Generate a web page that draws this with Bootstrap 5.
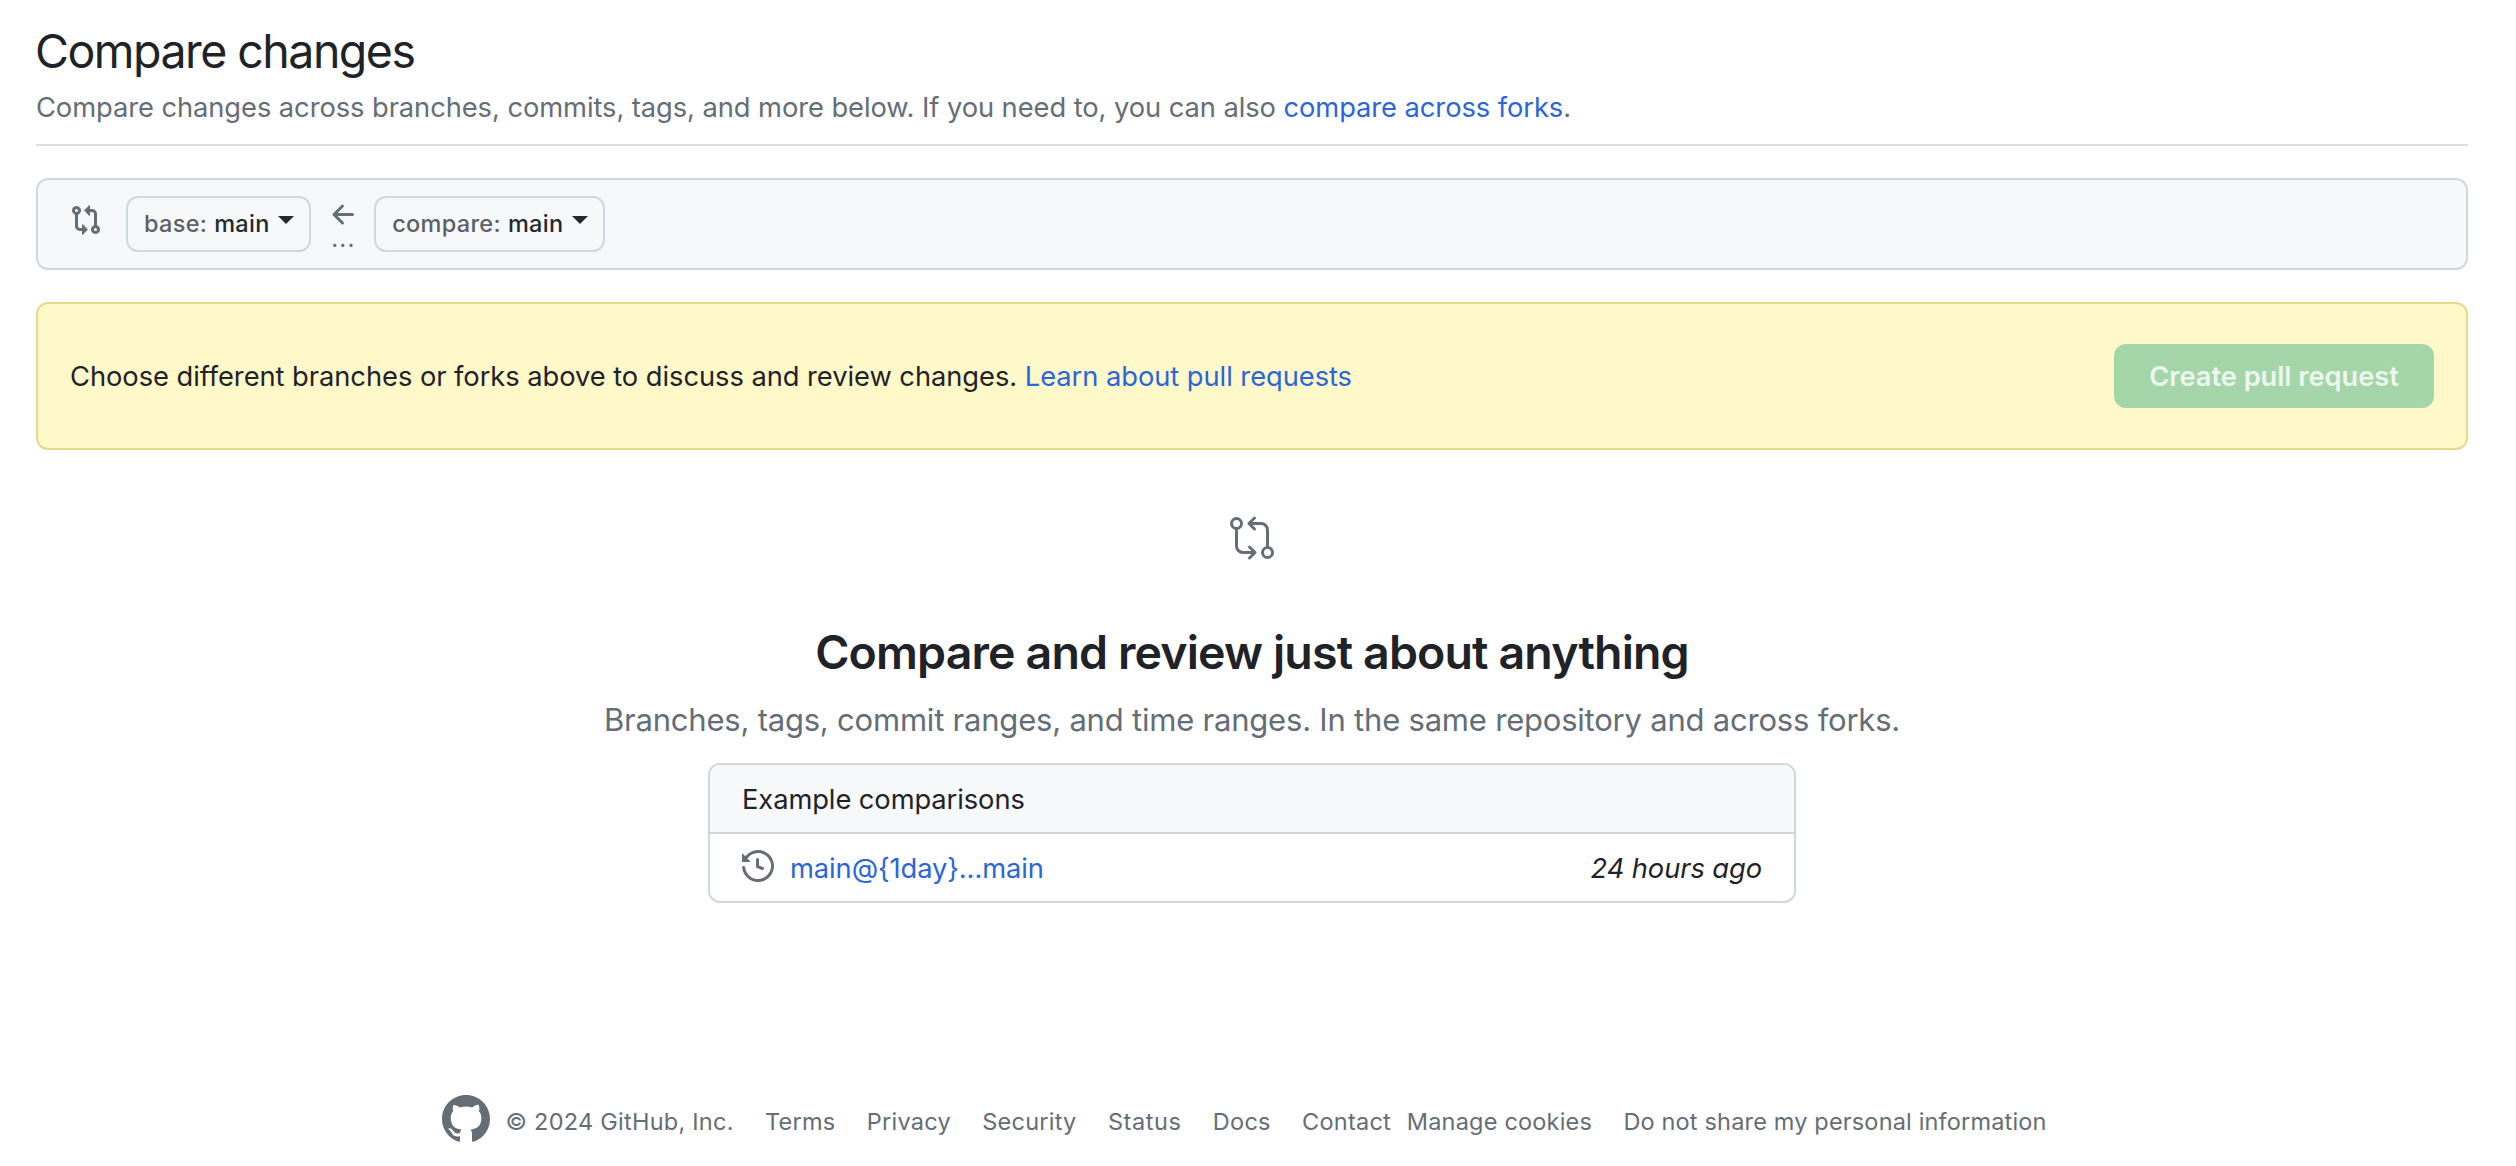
<!DOCTYPE html>
<html lang="en">
<head>
<meta charset="utf-8">
<title>Compare changes</title>
<link href="https://cdn.jsdelivr.net/npm/bootstrap@5.3.0/dist/css/bootstrap.min.css" rel="stylesheet">
<style>
:root{--fg:#1f2328;--muted:#656d76;--line:#d0d7de;--subtle:#f7f8fa;--accent:#2b66d9}
body{font-family:Inter,"Liberation Sans",sans-serif;font-size:27.3px;line-height:42px;color:var(--fg);background:#fff;overflow:hidden}
a{color:var(--accent);text-decoration:none}
svg{display:block;flex:none;fill:currentColor}
.fg-muted{color:var(--muted)}
.page{padding:21px 48px 0 36px}
.page-title{font-size:46.5px;line-height:60px;font-weight:400;letter-spacing:-1.53px;margin:0 0 6px -1px}
.subhead{border-bottom:2px solid #d8dee4;padding-bottom:15px;margin-bottom:32px}
.subhead p{letter-spacing:-.065px}
.range-editor{height:92px;border:2px solid var(--line);border-radius:12px;background:var(--subtle);padding-left:32px;margin-bottom:32px}
.range-icon{margin:-8px 24px 0 0}
.btn-ref{height:56px;border:2px solid var(--line);border-radius:12px;padding:0 15px 0 16px;font-size:23.5px;font-weight:500;line-height:52px;letter-spacing:.3px;color:#24292f;--bs-btn-bg:var(--subtle)}
.btn-ref .ref-key{color:#5c6066;margin-right:7px}
.ref-caret{width:0;height:0;border:8px solid transparent;border-top-color:#24292f;border-bottom:0;margin:-8px 0 0 8.5px}
.arrow-col{width:63px;height:88px;padding:19px 0 0 17px}
.arrow-dots{font-size:24px;line-height:20px;letter-spacing:1.2px;padding-left:3px;margin-top:-2px}
.notice{height:148px;border:2px solid #e9d78b;border-radius:12px;background:#fff8c9;padding:0 32px;letter-spacing:-.045px}
.notice-text{padding-top:2px}
.btn-create{width:320px;height:64px;border:0;border-radius:12px;font-size:27.3px;font-weight:600;line-height:66px;padding:0;letter-spacing:-.05px}
.btn-create:disabled{background:#a4d6aa;color:#ecf7ee;opacity:1}
.blank{padding-top:64px}
.blank h2{font-size:46.5px;line-height:60px;font-weight:600;letter-spacing:-.86px;margin:60px 0 14px}
.blank-text{font-size:31px;line-height:48px;letter-spacing:-.21px;margin:0 0 19px}
.examples{width:1088px;border:2px solid var(--line);border-radius:12px;overflow:hidden;letter-spacing:-.08px}
.examples>div{height:67px;padding:2px 32px 0}
.examples>.ex-head{height:69px;background:var(--subtle);border-bottom:2px solid var(--line)}
.ex-icon{margin-top:-5px}
.foot{padding:192px 0 0 406px;font-size:23.5px;line-height:30px;letter-spacing:.25px}
.foot nav{gap:31.3px;margin:5px 0 0 15.5px}
.foot .f-status{letter-spacing:.6px}
.foot .f-cookies{margin-left:-15.6px;letter-spacing:.2px}
.foot .f-share{letter-spacing:.17px}
</style>
</head>
<body>
<main class="page">
  <header class="subhead">
    <h1 class="page-title">Compare changes</h1>
    <p class="fg-muted mb-0">Compare changes across branches, commits, tags, and more below. If you need to, you can also <a href="#">compare across forks</a>.</p>
  </header>

  <div class="range-editor d-flex align-items-center">
    <svg class="range-icon fg-muted" width="32" height="32" viewBox="0 0 16 16"><path d="M9.573.677A.25.25 0 0 1 10 .854V2.5h1A2.5 2.5 0 0 1 13.5 5v5.628a2.251 2.251 0 1 1-1.5 0V5a1 1 0 0 0-1-1h-1v1.646a.25.25 0 0 1-.427.177L7.177 3.427a.25.25 0 0 1 0-.354ZM6 12v-1.646a.25.25 0 0 1 .427-.177l2.396 2.396a.25.25 0 0 1 0 .354l-2.396 2.396A.25.25 0 0 1 6 15.146V13.5H5A2.5 2.5 0 0 1 2.5 11V5.372a2.25 2.25 0 1 1 1.5 0V11a1 1 0 0 0 1 1ZM4 3.25a.75.75 0 1 0-1.5 0 .75.75 0 0 0 1.5 0ZM12.75 12a.75.75 0 1 0 0 1.5.75.75 0 0 0 0-1.5Z"/></svg>
    <button class="btn btn-ref d-flex align-items-center" type="button"><span class="ref-key">base:</span><span>main</span><span class="ref-caret"></span></button>
    <div class="arrow-col fg-muted">
      <svg width="32" height="32" viewBox="0 0 16 16"><path d="M7.78 12.53a.75.75 0 0 1-1.06 0L2.47 8.28a.75.75 0 0 1 0-1.06l4.25-4.25a.751.751 0 0 1 1.042.018.751.751 0 0 1 .018 1.042L4.81 7h7.44a.75.75 0 0 1 0 1.5H4.81l2.97 2.97a.75.75 0 0 1 0 1.06Z"/></svg>
      <div class="arrow-dots">...</div>
    </div>
    <button class="btn btn-ref d-flex align-items-center" type="button"><span class="ref-key">compare:</span><span>main</span><span class="ref-caret"></span></button>
  </div>

  <div class="notice d-flex align-items-center justify-content-between">
    <div class="notice-text">Choose different branches or forks above to discuss and review changes. <a href="#">Learn about pull requests</a></div>
    <button class="btn btn-success btn-create" type="button" disabled>Create pull request</button>
  </div>

  <section class="blank d-flex flex-column align-items-center">
    <svg class="fg-muted" width="48" height="48" viewBox="0 0 48 48"><g fill="none" stroke="currentColor" stroke-width="3" stroke-linecap="round" stroke-linejoin="round"><circle cx="8.5" cy="9.5" r="5"/><circle cx="39.5" cy="38.5" r="5"/><path d="M8.5 15v17a6.5 6.5 0 0 0 6.5 6.5h11M21.500 33l5.500 5.500-5.500 5.500M39.500 33V16a6.500 6.500 0 0 0-6.500-6.500H22M26.500 4 21 9.500l5.500 5.500"/></g></svg>
    <h2>Compare and review just about anything</h2>
    <p class="blank-text fg-muted">Branches, tags, commit ranges, and time ranges. In the same repository and across forks.</p>
    <div class="examples">
      <div class="ex-head d-flex align-items-center">Example comparisons</div>
      <div class="d-flex align-items-center">
        <svg class="ex-icon fg-muted" width="32" height="32" viewBox="0 0 16 16"><path d="m.427 1.927 1.215 1.215a8.002 8.002 0 1 1-1.6 5.685.75.75 0 1 1 1.493-.154 6.5 6.5 0 1 0 1.18-4.458l1.358 1.358A.25.25 0 0 1 3.896 6H.25A.25.25 0 0 1 0 5.75V2.104a.25.25 0 0 1 .427-.177ZM7.75 4a.75.75 0 0 1 .75.75v2.992l2.028.812a.75.75 0 0 1-.557 1.392l-2.5-1A.751.751 0 0 1 7 8.25v-3.5A.75.75 0 0 1 7.75 4Z"/></svg>
        <a class="ms-3" href="#">main@{1day}...main</a>
        <em class="ms-auto">24 hours ago</em>
      </div>
    </div>
  </section>

  <footer class="foot d-flex fg-muted">
    <svg width="48" height="48" viewBox="0 0 16 16"><path d="M8 0c4.42 0 8 3.58 8 8a8.013 8.013 0 0 1-5.45 7.59c-.4.08-.55-.17-.55-.38 0-.27.01-1.13.01-2.2 0-.75-.25-1.23-.54-1.48 1.78-.2 3.65-.88 3.65-3.95 0-.88-.31-1.59-.82-2.15.08-.2.36-1.02-.08-2.12 0 0-.67-.22-2.2.82-.64-.18-1.32-.27-2-.27-.68 0-1.36.09-2 .27-1.53-1.03-2.2-.82-2.2-.82-.44 1.1-.16 1.92-.08 2.12-.51.56-.82 1.28-.82 2.15 0 3.06 1.86 3.75 3.64 3.95-.23.2-.44.55-.51 1.07-.46.21-1.61.55-2.33-.66-.15-.24-.6-.83-1.23-.82-.67.01-.27.38.01.53.34.19.73.9.82 1.13.16.45.68 1.31 2.69.94 0 .67.01 1.3.01 1.49 0 .21-.15.45-.55.38A7.995 7.995 0 0 1 0 8c0-4.42 3.58-8 8-8Z"/></svg>
    <nav class="d-flex align-items-center text-nowrap">
      <span>© 2024 GitHub, Inc.</span>
      <a class="fg-muted" href="#">Terms</a>
      <a class="fg-muted" href="#">Privacy</a>
      <a class="fg-muted" href="#">Security</a>
      <a class="fg-muted f-status" href="#">Status</a>
      <a class="fg-muted" href="#">Docs</a>
      <a class="fg-muted" href="#">Contact</a>
      <a class="fg-muted f-cookies" href="#">Manage cookies</a>
      <a class="fg-muted f-share" href="#">Do not share my personal information</a>
    </nav>
  </footer>
</main>
<script src="https://cdn.jsdelivr.net/npm/bootstrap@5.3.0/dist/js/bootstrap.bundle.min.js"></script>
</body>
</html>
